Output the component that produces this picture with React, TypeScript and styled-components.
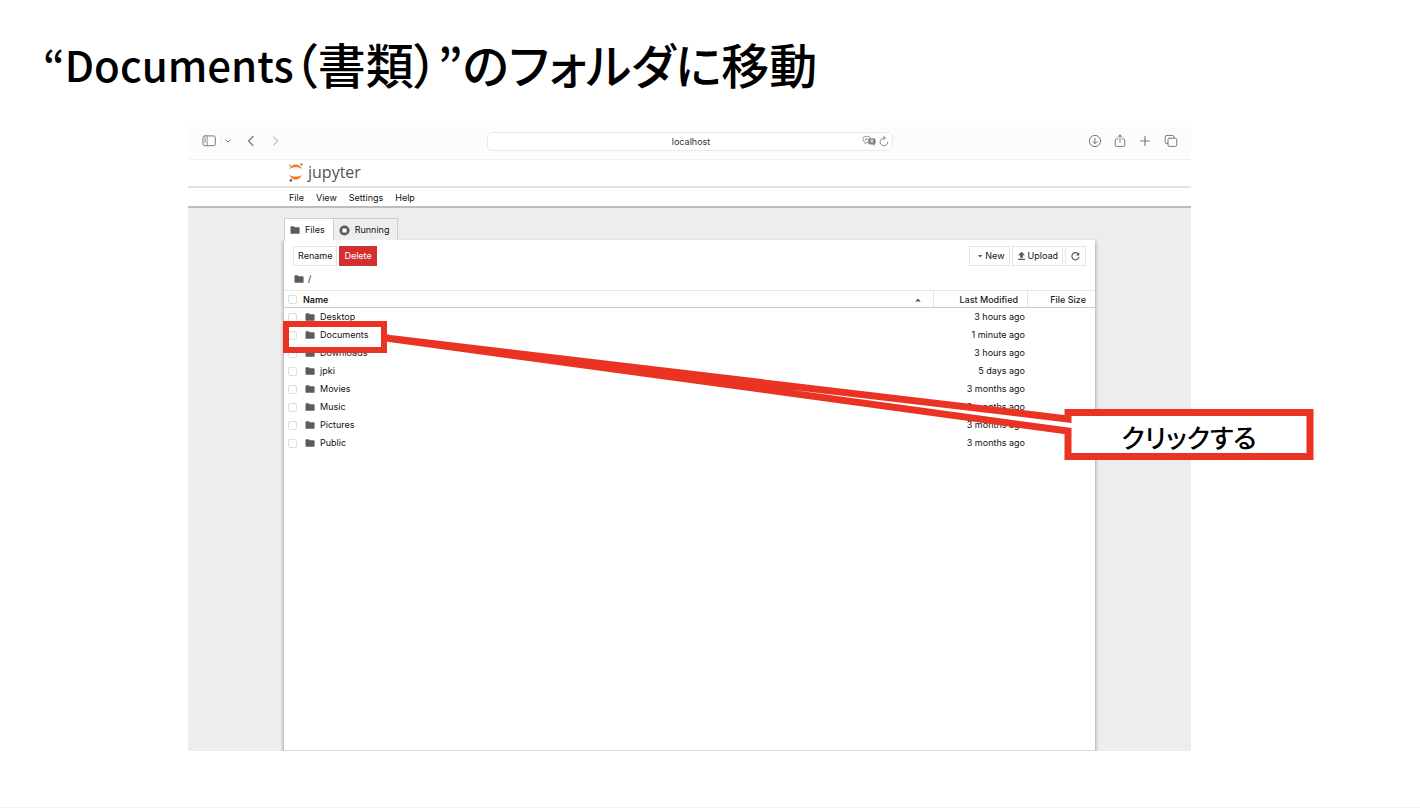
import React from "react";
import styled, { createGlobalStyle } from "styled-components";

const GlobalStyle = createGlobalStyle`
  *, *::before, *::after { box-sizing: border-box; }
  body { margin: 0; background: #fff; color: #000; }
  button, input { font: inherit; color: inherit; margin: 0; }
`;

const Slide = styled.main`
  display: flex;
  flex-direction: column;
  min-height: 100vh;
  padding: 33px 229px 56px 188px;
  border-bottom: 1px solid #f5f5f5;
`;

const Title = styled.h1`
  margin: 0 -200px 0 -145px;
  height: 94px;
  font: 500 48px/60px "Noto Sans CJK JP", sans-serif;
  font-feature-settings: "palt";
  white-space: nowrap;
`;

const Latin = styled.span`
  font-size: 42px;
  line-height: 1;
  vertical-align: 2px;
`;

const Browser = styled.section`
  position: relative;
  flex: 1;
  display: flex;
  flex-direction: column;
  background: #fff;
  font: 400 9px/12px Inter, "Liberation Sans", sans-serif;
  color: #111;
`;

const Toolbar = styled.div`
  display: grid;
  grid-template-columns: 1fr 406px 1fr;
  align-items: center;
  height: 33px;
  padding: 0 11px 4px;
  background: #fcfcfc;
  border-bottom: 1px solid #f0f0f0;
`;

const ToolGroup = styled.div<{ $end?: boolean }>`
  display: flex;
  align-items: center;
  justify-content: ${(p) => (p.$end ? "flex-end" : "flex-start")};
  gap: ${(p) => (p.$end ? "9px" : "5px")};
`;

const IconButton = styled.button<{ $faint?: boolean; $width?: number }>`
  display: flex;
  align-items: center;
  justify-content: center;
  width: ${(p) => p.$width ?? 16}px;
  height: 16px;
  padding: 0;
  border: 0;
  background: none;
  color: ${(p) => (p.$faint ? "#b4b4b4" : "#7a7a7a")};
`;

const ToolDivider = styled.span`
  width: 1px;
  height: 11px;
  margin: 0 -3px;
  background: #f1f1f1;
`;

const AddressBar = styled.div`
  display: flex;
  align-items: center;
  height: 19px;
  padding: 0 1px 0 34px;
  border: 1px solid #e9e9e9;
  border-radius: 5px;
  background: #fff;
`;

const AddressInput = styled.input`
  flex: 1;
  min-width: 0;
  padding: 1px 0 0;
  border: 0;
  outline: 0;
  background: none;
  text-align: center;
  color: #333;
`;

const Masthead = styled.header`
  display: flex;
  align-items: flex-start;
  height: 28px;
  padding: 2px 100px 0;
  border-bottom: 2px solid #e2e2e2;
`;

const Logo = styled.a`
  display: flex;
  align-items: center;
  gap: 4px;
  color: #555;
  text-decoration: none;
  font: 400 16px/20px "Open Sans", sans-serif;
`;

const MenuBar = styled.nav`
  display: flex;
  align-items: center;
  gap: 12px;
  height: 20px;
  padding: 1px 101px 0;
  border-bottom: 2px solid #bdbdbd;
`;

const MenuButton = styled.button`
  padding: 0;
  border: 0;
  background: none;
`;

const Workspace = styled.div`
  flex: 1;
  display: flex;
  flex-direction: column;
  padding: 10px 96px 0;
  background: #ededed;
  overflow: hidden;
`;

const Tabs = styled.div`
  display: flex;
  position: relative;
  z-index: 1;
`;

const Tab = styled.button<{ $active?: boolean }>`
  display: flex;
  align-items: center;
  gap: 5px;
  height: ${(p) => (p.$active ? "23px" : "22px")};
  margin-bottom: ${(p) => (p.$active ? "-1px" : "0")};
  padding: 0 8px 0 5px;
  border: 1px solid #cfcfcf;
  border-bottom: 0;
  border-left-width: ${(p) => (p.$active ? "1px" : "0")};
  background: ${(p) => (p.$active ? "#fff" : "#eee")};
`;

const Panel = styled.div`
  flex: 1;
  background: #fff;
  border-bottom: 1px solid #dcdcdc;
  box-shadow: 0 2px 3px 1px rgba(0, 0, 0, 0.28);
`;

const Actions = styled.div`
  display: flex;
  gap: 2px;
  padding: 6px 9px 0;
`;

const Spacer = styled.span`
  flex: 1;
`;

const ActionButton = styled.button<{ $danger?: boolean }>`
  display: flex;
  align-items: center;
  justify-content: center;
  gap: 2px;
  height: 20px;
  padding: 0 4px;
  border: 1px solid ${(p) => (p.$danger ? "#d32f2f" : "#e4e4e4")};
  background: ${(p) => (p.$danger ? "#d32f2f" : "#fff")};
  color: ${(p) => (p.$danger ? "#fff" : "#111")};
`;

const Breadcrumb = styled.div`
  display: flex;
  align-items: center;
  gap: 4px;
  height: 24px;
  padding: 1px 0 0 10px;
`;

const FileTable = styled.table`
  width: 100%;
  table-layout: fixed;
  border-collapse: separate;
  border-spacing: 0;
`;

const Col = styled.col<{ $width?: number }>`
  width: ${(p) => (p.$width ? `${p.$width}px` : "auto")};
`;

const HeadCell = styled.th<{ $end?: boolean }>`
  height: 18px;
  padding: 1px 9px 0 4px;
  border-top: 1px solid #e8e8e8;
  border-bottom: 1px solid #c8c8c8;
  border-left: ${(p) => (p.$end ? "1px solid #e4e4e4" : "0")};
  text-align: ${(p) => (p.$end ? "right" : "left")};
  font-weight: ${(p) => (p.$end ? 500 : 600)};
  color: #222;
`;

const Cell = styled.td<{ $end?: boolean }>`
  height: 18px;
  padding: 0 ${(p) => (p.$end ? "2px" : "0")} 0 4px;
  text-align: ${(p) => (p.$end ? "right" : "left")};
`;

const NameLabel = styled.label<{ $gap: number }>`
  display: flex;
  align-items: center;
  gap: ${(p) => p.$gap}px;
`;

const HeadRow = styled.div`
  display: flex;
  align-items: center;
  justify-content: space-between;
`;

const FileName = styled.span`
  display: flex;
  align-items: center;
  gap: 5px;
`;

const Check = styled.input`
  appearance: none;
  width: 9px;
  height: 9px;
  border: 1px solid #dedede;
  border-radius: 2px;
  background: #fff;
`;

const Highlight = styled.div`
  position: absolute;
  top: 194px;
  left: 95px;
  width: 104px;
  height: 32px;
  border: 6px solid #ea3323;
`;

const CalloutShape = styled.svg`
  position: absolute;
  top: 194px;
  left: 193px;
  pointer-events: none;
`;

const CalloutText = styled.p`
  position: absolute;
  top: 291px;
  left: 883px;
  width: 236px;
  margin: 0;
  text-align: center;
  color: #000;
  font: 500 26px/38px "Noto Sans CJK JP", sans-serif;
  font-feature-settings: "palt";
  white-space: nowrap;
`;

const FolderIcon = () => (
  <svg width="10" height="10" viewBox="0 0 10 10" fill="#5c5c5c" aria-hidden="true">
    <path d="M.5 2.2Q.5 1.3 1.4 1.3H3.8L4.8 2.3H8.7Q9.6 2.3 9.6 3.2V7.9Q9.6 8.8 8.7 8.8H1.4Q.5 8.8.5 7.9Z" />
  </svg>
);

const StopIcon = () => (
  <svg width="11" height="12" viewBox="0 0 11 12" aria-hidden="true">
    <circle cx="5.5" cy="6.5" r="5.1" fill="#5c5c5c" />
    <rect x="3.4" y="4.4" width="4.2" height="4.2" rx=".4" fill="#fff" />
  </svg>
);

const Line = ({ w = 14, h = 14, children }: { w?: number; h?: number; children: React.ReactNode }) => (
  <svg width={w} height={h} viewBox={`0 0 ${w} ${h}`} fill="none" stroke="currentColor" strokeLinecap="round" strokeLinejoin="round" aria-hidden="true">
    {children}
  </svg>
);

const JupyterMark = () => (
  <svg width="16" height="20" viewBox="0 0 16 20" aria-hidden="true">
    <path d="M1.4 7.2C2.4 4.2 4.9 2.6 7.7 2.6S13 4.2 14 7.2C12.6 5.9 10.3 5.3 7.7 5.3S2.8 5.9 1.4 7.2Z" fill="#f37726" />
    <path d="M1.4 12.6C2.4 16 4.9 17.7 7.7 17.7S13 16 14 12.6C12.6 14.1 10.3 14.8 7.7 14.8S2.8 14.1 1.4 12.6Z" fill="#f37726" />
    <circle cx="13.4" cy="2.4" r="1.1" fill="#767677" />
    <circle cx="1.8" cy="3.6" r=".8" fill="#767677" />
    <circle cx="2.9" cy="18.4" r="1.3" fill="#616262" />
  </svg>
);

const files = [
  ["Desktop", "3 hours ago"],
  ["Documents", "1 minute ago"],
  ["Downloads", "3 hours ago"],
  ["jpki", "5 days ago"],
  ["Movies", "3 months ago"],
  ["Music", "3 months ago"],
  ["Pictures", "3 months ago"],
  ["Public", "3 months ago"],
];

export default function App() {
  return (
    <>
      <GlobalStyle />
      <Slide>
        <Title><Latin>“Documents</Latin>（書類）”のフォルダに移動</Title>
        <Browser>
          <Toolbar>
            <ToolGroup>
              <IconButton $width={20} aria-label="Sidebar">
                <Line>
                  <rect x=".9" y="1.9" width="12.4" height="9.8" rx="1.8" />
                  <path d="M5.2 2V11.6M2.4 4.2H3.6M2.4 6H3.6M2.4 7.8H3.6" strokeWidth=".8" />
                </Line>
              </IconButton>
              <ToolDivider />
              <IconButton $width={8} aria-label="Tab groups">
                <Line w={6} h={6}><path d="M1 2L3 4L5 2" /></Line>
              </IconButton>
              <IconButton $width={28} aria-label="Back">
                <Line><path d="M9 2.5L4.5 7L9 11.5" strokeWidth="1.3" /></Line>
              </IconButton>
              <IconButton $faint $width={12} aria-label="Forward">
                <Line><path d="M4.5 2.5L9 7L4.5 11.5" strokeWidth="1.2" /></Line>
              </IconButton>
            </ToolGroup>
            <AddressBar>
              <AddressInput aria-label="Address" defaultValue="localhost" />
              <IconButton aria-label="Translate">
                <Line>
                  <path d="M6 8.2L3.2 9.8V8.3Q1 8 1 5.6V4.6Q1 2.4 3.2 2.4H6Q8 2.4 8 4.2M3.2 6.7L4.5 3.9L5.4 5.8" strokeWidth=".7" />
                  <path d="M7.6 4.6H12Q13.4 4.6 13.4 6V8.8Q13.4 10.2 12.2 10.2V11.6L10.6 10.2H7.6Q6.4 10.2 6.4 8.8V6Q6.4 4.6 7.6 4.6Z" fill="#777" strokeWidth=".3" />
                  <path d="M8.2 6.3H11.6M9.9 5.6V6.3M8.6 8.9Q10.8 8.2 11 6.5M8.9 6.8Q9.6 8.4 11.4 8.9" stroke="#fff" strokeWidth=".6" />
                </Line>
              </IconButton>
              <IconButton $width={14} aria-label="Reload">
                <Line w={12} h={12}><path d="M7 3.1A3.9 3.9 0 1 0 9.9 7M5.4 1L7.4 3.1L5.4 5" strokeWidth=".9" /></Line>
              </IconButton>
            </AddressBar>
            <ToolGroup $end>
              <IconButton aria-label="Downloads">
                <Line><circle cx="7" cy="7" r="5.6" /><path d="M7 4.2V9.4M4.9 7.5L7 9.6L9.1 7.5" /></Line>
              </IconButton>
              <IconButton aria-label="Share">
                <Line><path d="M4.6 5H3.2Q2.2 5 2.2 6V11.4Q2.2 12.4 3.2 12.4H10.8Q11.8 12.4 11.8 11.4V6Q11.8 5 10.8 5H9.4M7 8.4V1M4.9 2.9L7 .9L9.1 2.9" /></Line>
              </IconButton>
              <IconButton aria-label="New tab">
                <Line><path d="M7 2.6V11.4M2.6 7H11.4" strokeWidth="1.2" /></Line>
              </IconButton>
              <IconButton $width={18} aria-label="Show tabs">
                <Line><rect x="4" y="4.2" width="8.8" height="8.2" rx="1.6" /><path d="M3.8 9.6H3Q1.2 9.6 1.2 7.8V3.2Q1.2 1.4 3 1.4H8.2Q10 1.4 10 3.2V4" /></Line>
              </IconButton>
            </ToolGroup>
          </Toolbar>
          <Masthead>
            <Logo href="#"><JupyterMark />jupyter</Logo>
          </Masthead>
          <MenuBar>
            {["File", "View", "Settings", "Help"].map((item) => (
              <MenuButton key={item}>{item}</MenuButton>
            ))}
          </MenuBar>
          <Workspace>
            <Tabs>
              <Tab $active><FolderIcon />Files</Tab>
              <Tab><StopIcon />Running</Tab>
            </Tabs>
            <Panel>
              <Actions>
                <ActionButton>Rename</ActionButton>
                <ActionButton $danger>Delete</ActionButton>
                <Spacer />
                <ActionButton>
                  <svg width="9" height="6" viewBox="0 0 9 6" fill="#555" aria-hidden="true"><path d="M4 2H8.4L6.2 4.6Z" /></svg>
                  New
                </ActionButton>
                <ActionButton>
                  <svg width="9" height="10" viewBox="0 0 9 10" fill="#555" aria-hidden="true"><path d="M4.5.8L7.9 4.2H5.8V6.8H3.2V4.2H1.1ZM1.1 7.8H7.9V9H1.1Z" /></svg>
                  Upload
                </ActionButton>
                <ActionButton aria-label="Refresh">
                  <Line w={11} h={11}><path d="M8.4 3.1A3.6 3.6 0 1 0 9 6.2" stroke="#555" strokeWidth="1.1" /><path d="M9.3 1.3V4.6H6Z" fill="#555" stroke="none" /></Line>
                </ActionButton>
              </Actions>
              <Breadcrumb><FolderIcon />/</Breadcrumb>
              <FileTable>
                <colgroup><Col /><Col $width={94} /><Col $width={68} /></colgroup>
                <thead>
                  <tr>
                    <HeadCell>
                      <HeadRow>
                        <NameLabel $gap={6}><Check type="checkbox" />Name</NameLabel>
                        <svg width="12" height="6" viewBox="0 0 12 6" fill="#555" aria-hidden="true"><path d="M3.2 4.6L6 1.6L8.8 4.6Z" /></svg>
                      </HeadRow>
                    </HeadCell>
                    <HeadCell $end>Last Modified</HeadCell>
                    <HeadCell $end>File Size</HeadCell>
                  </tr>
                </thead>
                <tbody>
                  {files.map(([name, modified]) => (
                    <tr key={name}>
                      <Cell>
                        <NameLabel $gap={8}><Check type="checkbox" /><FileName><FolderIcon />{name}</FileName></NameLabel>
                      </Cell>
                      <Cell $end>{modified}</Cell>
                      <Cell />
                    </tr>
                  ))}
                </tbody>
              </FileTable>
            </Panel>
          </Workspace>
          <Highlight />
          <CalloutShape width="936" height="144" viewBox="0 0 936 144" aria-hidden="true">
            <path d="M687 91.5H929V135.5H687V110L5 17L687 98Z" fill="#fff" stroke="#ea3323" strokeWidth="7" />
          </CalloutShape>
          <CalloutText>クリックする</CalloutText>
        </Browser>
      </Slide>
    </>
  );
}
